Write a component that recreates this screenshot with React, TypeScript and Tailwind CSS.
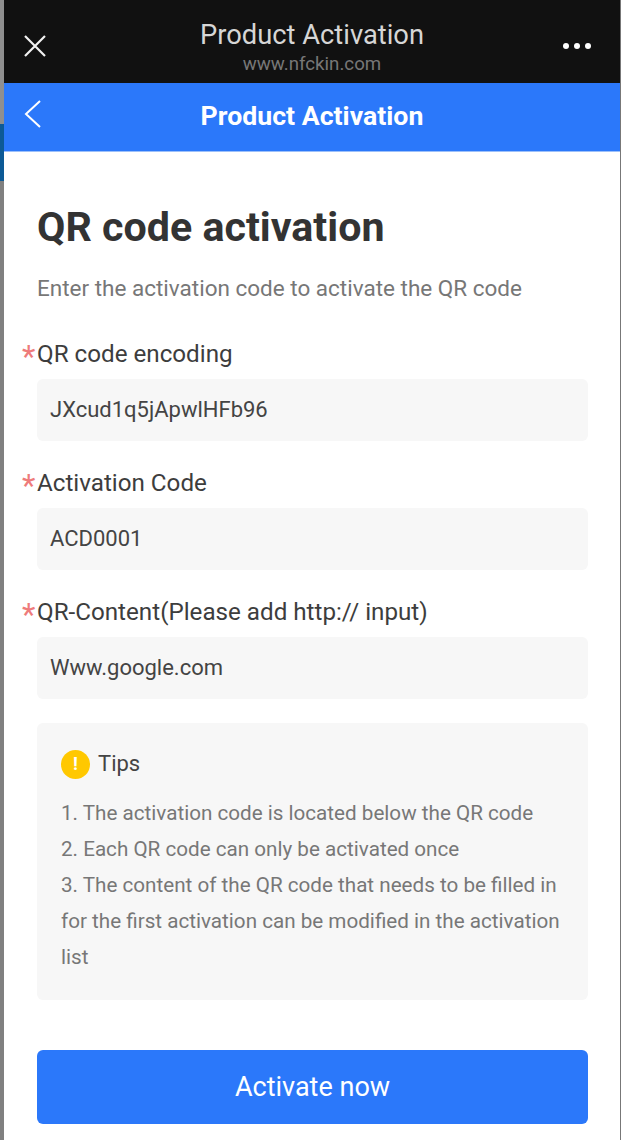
const font = "font-['Roboto','Noto_Sans',sans-serif]";

function Field({ label, value }: { label: string; value: string }) {
  return (
    <div className="flex flex-col">
      <div className="relative h-[30px] text-[24.2px] leading-[30px] text-[#3d3d3d]">
        <span className="absolute -left-[15px] top-[3px] text-[31px] leading-[30px] text-[#ee7b7b]">*</span>
        {label}
      </div>
      <div className="mt-[10px] flex h-[62px] items-center rounded-[6px] bg-[#f7f7f7] px-[13px] pb-[2px] text-[22px] text-[#444444]">
        {value}
      </div>
    </div>
  );
}

export default function App() {
  return (
    <div className={`${font} flex h-[1140px] w-[621px] overflow-hidden bg-[#8a8a8a]`}>
      <div className="flex w-[4px] shrink-0 flex-col">
        <div className="h-[124px] bg-[#8f8f8f]" />
        <div className="h-[57px] bg-[#0d5a96]" />
        <div className="flex-1 bg-[#808080]" />
      </div>
      <div className="flex min-w-0 flex-1 flex-col bg-white">
        <header className="grid h-[83px] grid-cols-[1fr_auto_1fr] items-center bg-[#111111] pl-[19px] pr-[29px]">
          <svg width="24" height="24" viewBox="0 0 24 24" fill="none" stroke="#f2f2f2" strokeWidth="2.2" className="mt-[9px]">
            <path d="M2 2 L22 22 M22 2 L2 22" />
          </svg>
          <div className="ml-[10px] mt-[11px] flex flex-col items-center">
            <div className="text-[27.3px] leading-[34px] text-[#d6d6d6]">Product Activation</div>
            <div className="text-[18.7px] leading-[24px] text-[#777777]">www.nfckin.com</div>
          </div>
          <div className="mt-[9px] flex gap-[5px] justify-self-end">
            <span className="h-[6px] w-[6px] rounded-full bg-white" />
            <span className="h-[6px] w-[6px] rounded-full bg-white" />
            <span className="h-[6px] w-[6px] rounded-full bg-white" />
          </div>
        </header>
        <div className="relative flex h-[69px] items-center justify-center border-b border-[#9cc0fa] bg-[#2b78fa] pb-[2px] text-[26.7px] font-bold text-white">
          <svg width="18" height="30" viewBox="0 0 18 30" fill="none" stroke="#ffffff" strokeWidth="2" className="absolute left-[20px] top-[17px]">
            <path d="M16 1 L2 14 L16 27" />
          </svg>
          Product Activation
        </div>
        <main className="flex flex-1 flex-col pl-[33px] pr-[32px]">
          <h1 className="mt-[50px] text-[41.2px] font-bold leading-[50px] text-[#333333]">QR code activation</h1>
          <p className="mt-[21px] text-[22.5px] leading-[30px] text-[#777777]">Enter the activation code to activate the QR code</p>
          <div className="mt-[36px] flex flex-col gap-[27px]">
            <Field label="QR code encoding" value="JXcud1q5jApwlHFb96" />
            <Field label="Activation Code" value="ACD0001" />
            <Field label="QR-Content(Please add http:// input)" value="Www.google.com" />
          </div>
          <section className="mt-[24px] h-[277px] rounded-[6px] bg-[#f7f7f7] px-[24px] pt-[26px]">
            <div className="flex items-center gap-[8px] text-[22px] leading-[30px] text-[#444444]">
              <span className="flex h-[29px] w-[29px] items-center justify-center rounded-full bg-[#ffc800] text-[18px] font-bold text-white">!</span>
              Tips
            </div>
            <div className="mt-[16px] text-[20.65px] leading-[36px] text-[#777777]">
              <div>1. The activation code is located below the QR code</div>
              <div>2. Each QR code can only be activated once</div>
              <div>3. The content of the QR code that needs to be filled in for the first activation can be modified in the activation list</div>
            </div>
          </section>
          <button className="mt-[50px] h-[74px] w-full rounded-[6px] bg-[#2b78fa] text-[27px] text-white">Activate now</button>
        </main>
      </div>
      <div className="w-px shrink-0 bg-[#777777]" />
    </div>
  );
}
